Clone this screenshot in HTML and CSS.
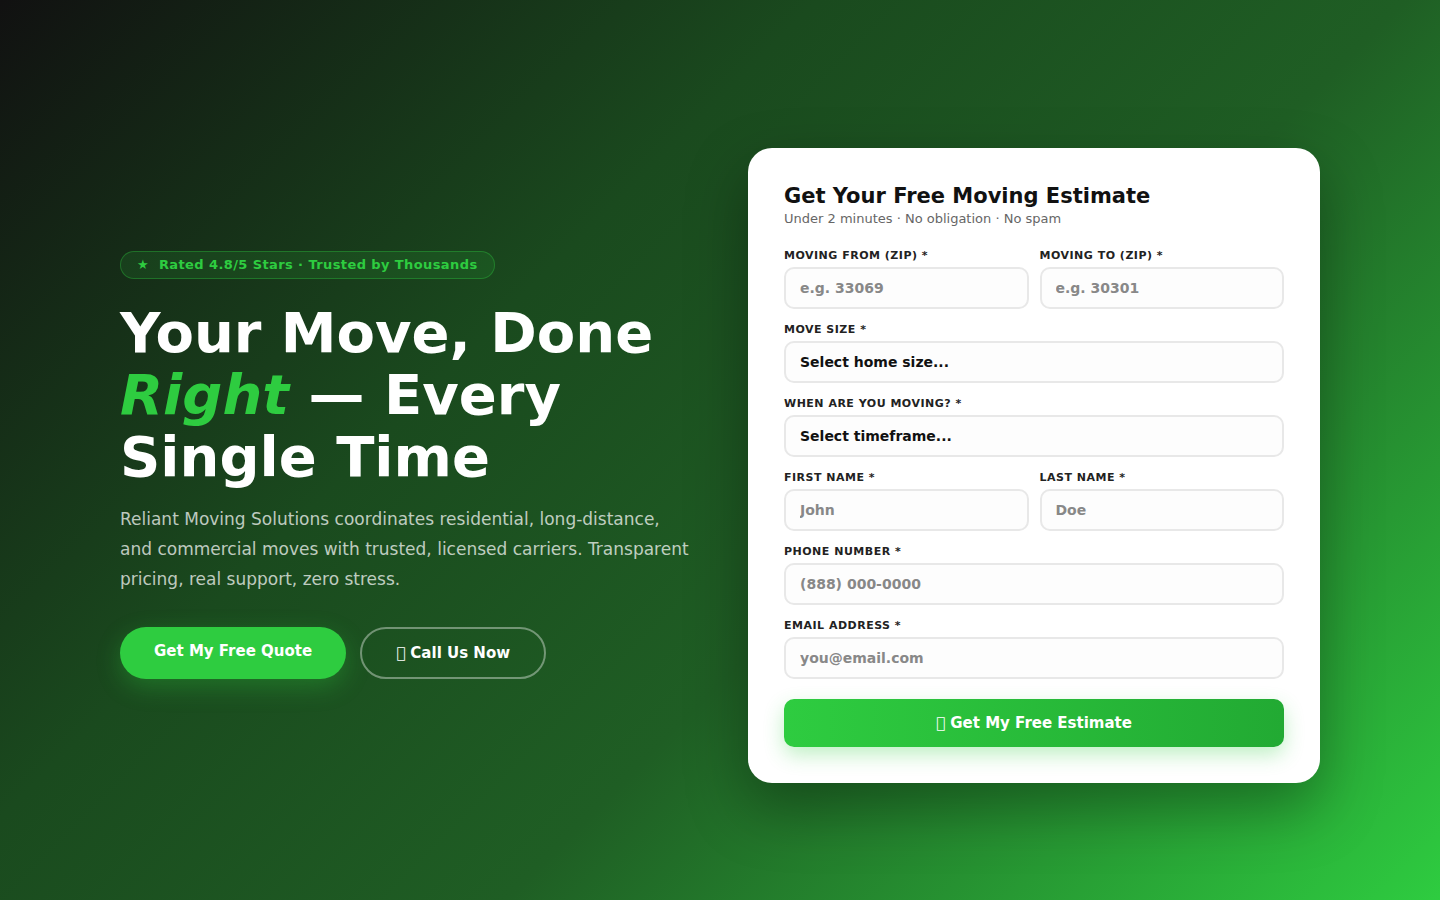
FILE: index.html
```html
<!DOCTYPE html>
<html lang="en">
<head>
    <meta charset="UTF-8">
    <meta name="viewport" content="width=device-width, initial-scale=1.0">
    <title>Reliant Moving Solutions</title>
    <link rel="stylesheet" href="styles.css">
</head>
<body>

    <section class="hero">
        <div class="hero-text">
            <span class="badge">★ &nbsp;Rated 4.8/5 Stars · Trusted by Thousands</span>
            <h1>Your Move, Done <em>Right</em> — Every Single Time</h1>
            <p class="lead">Reliant Moving Solutions coordinates residential, long-distance, and commercial moves with trusted, licensed carriers. Transparent pricing, real support, zero stress.</p>
            <div class="hero-actions">
                <a href="#quote" class="btn btn-primary">Get My Free Quote</a>
                <a href="#" class="btn btn-outline">&#xE000; Call Us Now</a>
            </div>
        </div>

        <form class="quote-card" id="quote">
            <h2>Get Your Free Moving Estimate</h2>
            <p class="subtitle">Under 2 minutes · No obligation · No spam</p>

            <div class="row">
                <div class="field">
                    <label for="from">Moving From (ZIP) *</label>
                    <input type="text" id="from" placeholder="e.g. 33069">
                </div>
                <div class="field">
                    <label for="to">Moving To (ZIP) *</label>
                    <input type="text" id="to" placeholder="e.g. 30301">
                </div>
            </div>

            <div class="field">
                <label for="size">Move Size *</label>
                <select id="size">
                    <option>Select home size...</option>
                </select>
            </div>

            <div class="field">
                <label for="when">When are you moving? *</label>
                <select id="when">
                    <option>Select timeframe...</option>
                </select>
            </div>

            <div class="row">
                <div class="field">
                    <label for="first">First Name *</label>
                    <input type="text" id="first" placeholder="John">
                </div>
                <div class="field">
                    <label for="last">Last Name *</label>
                    <input type="text" id="last" placeholder="Doe">
                </div>
            </div>

            <div class="field">
                <label for="phone">Phone Number *</label>
                <input type="tel" id="phone" placeholder="(888) 000-0000">
            </div>

            <div class="field">
                <label for="email">Email Address *</label>
                <input type="email" id="email" placeholder="you@email.com">
            </div>

            <button type="submit" class="submit-btn">&#xE000; Get My Free Estimate</button>
        </form>
    </section>

</body>
</html>
```

FILE: styles.css
```css
* {
    box-sizing: border-box;
}

body {
    margin: 0;
    padding: 0;
    font-family: "DejaVu Sans", sans-serif;
    background: linear-gradient(135deg, #111111 0%, #1a4a1e 35%, #1f5e24 60%, #2ecc40 100%);
    min-height: 100vh;
}

.hero {
    min-height: 100vh;
    padding: 80px 120px 50px;
    display: grid;
    grid-template-columns: 1fr 1fr;
    gap: 56px;
    align-items: center;
}

.badge {
    display: inline-block;
    padding: 6px 16px;
    border: 1px solid rgba(46, 204, 64, 0.35);
    background-color: rgba(46, 204, 64, 0.12);
    border-radius: 999px;
    color: #2ecc40;
    font-size: 13px;
    font-weight: bold;
    letter-spacing: 0.4px;
    line-height: 14px;
}

h1 {
    margin: 23px 0 16px;
    color: #fff;
    font-size: 56px;
    line-height: 62px;
    font-weight: bold;
}

h1 em {
    color: #2ecc40;
}

.lead {
    margin: 0 0 33px;
    color: rgba(255, 255, 255, 0.72);
    font-size: 17px;
    line-height: 30px;
}

.hero-actions {
    display: flex;
    gap: 14px;
}

.btn {
    display: inline-flex;
    align-items: center;
    justify-content: center;
    height: 52px;
    padding: 0 34px;
    border-radius: 999px;
    color: #fff;
    font-size: 15px;
    font-weight: bold;
    text-decoration: none;
}

.btn-primary {
    background-color: #2ecc40;
    padding-bottom: 4px;
    box-shadow: 0 8px 24px rgba(46, 204, 64, 0.3);
}

.btn-outline {
    border: 2px solid rgba(255, 255, 255, 0.38);
}

.quote-card {
    background-color: #fff;
    border-radius: 24px;
    padding: 36px;
    box-shadow: 0 25px 60px rgba(0, 0, 0, 0.35);
}

.quote-card h2 {
    margin: 0;
    font-size: 21px;
    line-height: 24px;
    color: #111;
}

.subtitle {
    margin: 3px 0 22px;
    color: #666;
    font-size: 13px;
    line-height: 16px;
}

.row {
    display: grid;
    grid-template-columns: 1fr 1fr;
    gap: 11px;
}

.field {
    margin-bottom: 14px;
}

label {
    display: block;
    margin-bottom: 4px;
    color: #222;
    font-size: 11px;
    line-height: 14px;
    font-weight: bold;
    text-transform: uppercase;
    letter-spacing: 0.5px;
}

input, select {
    width: 100%;
    height: 42px;
    padding: 0 14px;
    border: 2px solid #e8e8e8;
    border-radius: 10px;
    background-color: #fdfdfd;
    font-family: "DejaVu Sans", sans-serif;
    font-size: 14px;
    font-weight: bold;
    color: #111;
    appearance: none;
}

input::placeholder {
    color: #888;
}

.submit-btn {
    width: 100%;
    height: 48px;
    margin-top: 6px;
    border: none;
    border-radius: 10px;
    background: linear-gradient(90deg, #2ecc40, #22aa33);
    color: #fff;
    font-family: "DejaVu Sans", sans-serif;
    font-size: 15px;
    font-weight: bold;
    box-shadow: 0 8px 20px rgba(46, 204, 64, 0.3);
    cursor: pointer;
}
```
